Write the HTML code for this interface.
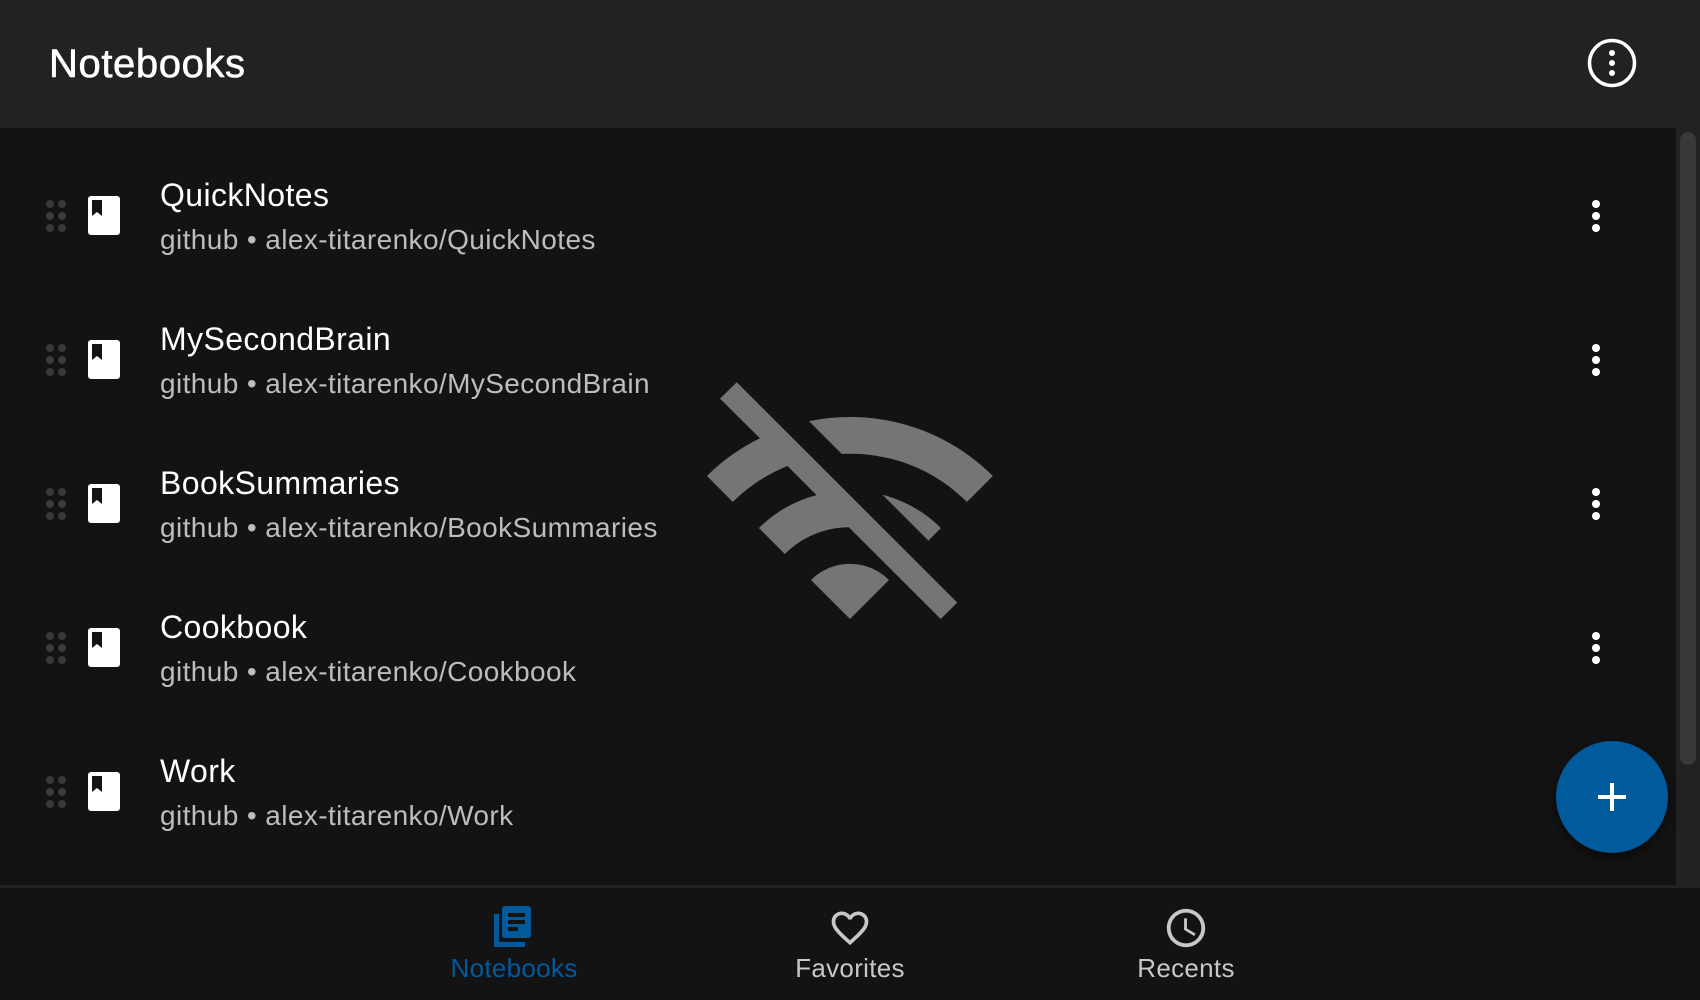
<!DOCTYPE html>
<html><head><meta charset="utf-8"><style>
*{margin:0;padding:0;box-sizing:border-box}
body{width:1700px;height:1000px;background:#131313;font-family:"Liberation Sans",sans-serif;position:relative;overflow:hidden}
.hdr{position:absolute;left:0;top:0;width:1700px;height:128px;background:#222}
.hdr h1{position:absolute;left:49px;top:42px;font-size:40px;font-weight:normal;color:#fff;letter-spacing:0.6px;-webkit-text-stroke:0.6px #fff}
.track{position:absolute;left:1676px;top:128px;width:24px;height:758px;background:#222}
.thumb{position:absolute;left:1680px;top:132px;width:16px;height:633px;background:#393939;border-radius:8px}
.row{position:absolute;left:0;width:1676px;height:144px}
.t{position:absolute;left:160px;top:32px;font-size:32px;letter-spacing:0.4px;color:#fff;line-height:38px}
.s{position:absolute;left:160px;top:79px;font-size:28px;letter-spacing:0.4px;color:#bdbdbd;line-height:33px}
.nav{position:absolute;left:0;top:885px;width:1700px;height:115px;background:#131313;border-top:3px solid #222}
.lbl{position:absolute;top:65px;font-size:26px;letter-spacing:0.3px;color:#c8c8c8;transform:translateX(-50%)}
</style></head><body>
<div class="hdr"><h1>Notebooks</h1>
<svg style="position:absolute;left:1586px;top:37px" width="52" height="52" viewBox="0 0 52 52"><circle cx="26" cy="26" r="22.5" fill="none" stroke="#fff" stroke-width="3.5"/><circle cx="26" cy="16" r="3" fill="#fff"/><circle cx="26" cy="26" r="3" fill="#fff"/><circle cx="26" cy="36" r="3" fill="#fff"/></svg>
</div>
<div class="track"></div><div class="thumb"></div>

<div class="row" style="top:144px"><svg style="position:absolute;left:0;top:0" width="1676" height="144"><g fill="#3a3a3a"><circle cx="50" cy="60" r="4"/><circle cx="62" cy="60" r="4"/><circle cx="50" cy="72" r="4"/><circle cx="62" cy="72" r="4"/><circle cx="50" cy="84" r="4"/><circle cx="62" cy="84" r="4"/></g><rect x="88" y="52" width="32" height="39" rx="3" fill="#fff"/><path d="M92 56h10v16l-5-4-5 4z" fill="#131313"/><g fill="#fff"><circle cx="1596" cy="60" r="4"/><circle cx="1596" cy="72" r="4"/><circle cx="1596" cy="84" r="4"/></g></svg><div class="t">QuickNotes</div><div class="s">github • alex-titarenko/QuickNotes</div></div>

<div class="row" style="top:288px"><svg style="position:absolute;left:0;top:0" width="1676" height="144"><g fill="#3a3a3a"><circle cx="50" cy="60" r="4"/><circle cx="62" cy="60" r="4"/><circle cx="50" cy="72" r="4"/><circle cx="62" cy="72" r="4"/><circle cx="50" cy="84" r="4"/><circle cx="62" cy="84" r="4"/></g><rect x="88" y="52" width="32" height="39" rx="3" fill="#fff"/><path d="M92 56h10v16l-5-4-5 4z" fill="#131313"/><g fill="#fff"><circle cx="1596" cy="60" r="4"/><circle cx="1596" cy="72" r="4"/><circle cx="1596" cy="84" r="4"/></g></svg><div class="t">MySecondBrain</div><div class="s">github • alex-titarenko/MySecondBrain</div></div>

<div class="row" style="top:432px"><svg style="position:absolute;left:0;top:0" width="1676" height="144"><g fill="#3a3a3a"><circle cx="50" cy="60" r="4"/><circle cx="62" cy="60" r="4"/><circle cx="50" cy="72" r="4"/><circle cx="62" cy="72" r="4"/><circle cx="50" cy="84" r="4"/><circle cx="62" cy="84" r="4"/></g><rect x="88" y="52" width="32" height="39" rx="3" fill="#fff"/><path d="M92 56h10v16l-5-4-5 4z" fill="#131313"/><g fill="#fff"><circle cx="1596" cy="60" r="4"/><circle cx="1596" cy="72" r="4"/><circle cx="1596" cy="84" r="4"/></g></svg><div class="t">BookSummaries</div><div class="s">github • alex-titarenko/BookSummaries</div></div>

<div class="row" style="top:576px"><svg style="position:absolute;left:0;top:0" width="1676" height="144"><g fill="#3a3a3a"><circle cx="50" cy="60" r="4"/><circle cx="62" cy="60" r="4"/><circle cx="50" cy="72" r="4"/><circle cx="62" cy="72" r="4"/><circle cx="50" cy="84" r="4"/><circle cx="62" cy="84" r="4"/></g><rect x="88" y="52" width="32" height="39" rx="3" fill="#fff"/><path d="M92 56h10v16l-5-4-5 4z" fill="#131313"/><g fill="#fff"><circle cx="1596" cy="60" r="4"/><circle cx="1596" cy="72" r="4"/><circle cx="1596" cy="84" r="4"/></g></svg><div class="t">Cookbook</div><div class="s">github • alex-titarenko/Cookbook</div></div>

<div class="row" style="top:720px"><svg style="position:absolute;left:0;top:0" width="1676" height="144"><g fill="#3a3a3a"><circle cx="50" cy="60" r="4"/><circle cx="62" cy="60" r="4"/><circle cx="50" cy="72" r="4"/><circle cx="62" cy="72" r="4"/><circle cx="50" cy="84" r="4"/><circle cx="62" cy="84" r="4"/></g><rect x="88" y="52" width="32" height="39" rx="3" fill="#fff"/><path d="M92 56h10v16l-5-4-5 4z" fill="#131313"/></svg><div class="t">Work</div><div class="s">github • alex-titarenko/Work</div></div>

<svg style="position:absolute;left:694px;top:359px" width="312" height="312" viewBox="0 0 24 24"><path fill="#757575" d="M22.99 9C19.150 5.16 13.8 3.76 8.84 4.78l2.52 2.52c3.47-.17 6.99 1.05 9.630 3.7l2-2zm-4 4c-1.29-1.29-2.84-2.13-4.490-2.56l3.53 3.53.96-.97zM2 3.05L5.07 6.1C3.6 6.82 2.22 7.78 1 9l1.990 2c1.24-1.24 2.67-2.16 4.2-2.77l2.24 2.24C7.81 10.89 6.27 11.73 5 13v.01L6.99 15c1.36-1.36 3.140-2.04 4.92-2.06L18.98 20l1.27-1.26L3.29 1.790 2 3.05zM9 17l3 3 3-3c-1.65-1.66-4.34-1.66-6 0z"/></svg>

<div style="position:absolute;left:1556px;top:741px;width:112px;height:112px;border-radius:50%;background:#005a9c;box-shadow:0 4px 12px rgba(0,0,0,.5)"></div>
<svg style="position:absolute;left:1596px;top:781px" width="32" height="32"><rect x="14" y="2" width="4" height="28" fill="#fff"/><rect x="2" y="14" width="28" height="4" fill="#fff"/></svg>

<div class="nav">
<svg style="position:absolute;left:494px;top:18px" width="40" height="42" viewBox="0 0 40 42"><path d="M0 8h5v28h26v5H0z" fill="#005a9c"/><rect x="8" y="0" width="29" height="32" rx="3" fill="#005a9c"/><g fill="#131313"><rect x="14" y="7" width="17" height="4"/><rect x="14" y="14" width="17" height="4"/><rect x="14" y="21" width="10" height="4"/></g></svg>
<div class="lbl" style="left:514px;color:#005a9c">Notebooks</div>
<svg style="position:absolute;left:828px;top:18px" width="44" height="44" viewBox="0 0 24 24"><path fill="#c8c8c8" d="M16.5 3c-1.74 0-3.41.81-4.5 2.09C10.91 3.81 9.24 3 7.5 3 4.42 3 2 5.42 2 8.5c0 3.78 3.4 6.86 8.55 11.54L12 21.35l1.45-1.32C18.6 15.36 22 12.28 22 8.5 22 5.42 19.58 3 16.5 3zm-4.4 15.55l-.1.1-.1-.1C7.14 14.240 4 11.39 4 8.5 4 6.5 5.5 5 7.5 5c1.54 0 3.04.99 3.57 2.36h1.87C13.46 5.99 14.96 5 16.5 5c2 0 3.5 1.5 3.5 3.5 0 2.89-3.14 5.74-7.9 10.05z"/></svg>
<div class="lbl" style="left:850px">Favorites</div>
<svg style="position:absolute;left:1163px;top:17px" width="46" height="46" viewBox="0 0 24 24"><path fill="#c8c8c8" d="M11.99 2C6.47 2 2 6.48 2 12s4.47 10 9.99 10C17.52 22 22 17.52 22 12S17.52 2 11.99 2zM12 20c-4.42 0-8-3.58-8-8s3.58-8 8-8 8 3.58 8 8-3.58 8-8 8zm.5-13H11v6l5.25 3.15.75-1.23-4.5-2.67z"/></svg>
<div class="lbl" style="left:1186px">Recents</div>
</div>
</body></html>
